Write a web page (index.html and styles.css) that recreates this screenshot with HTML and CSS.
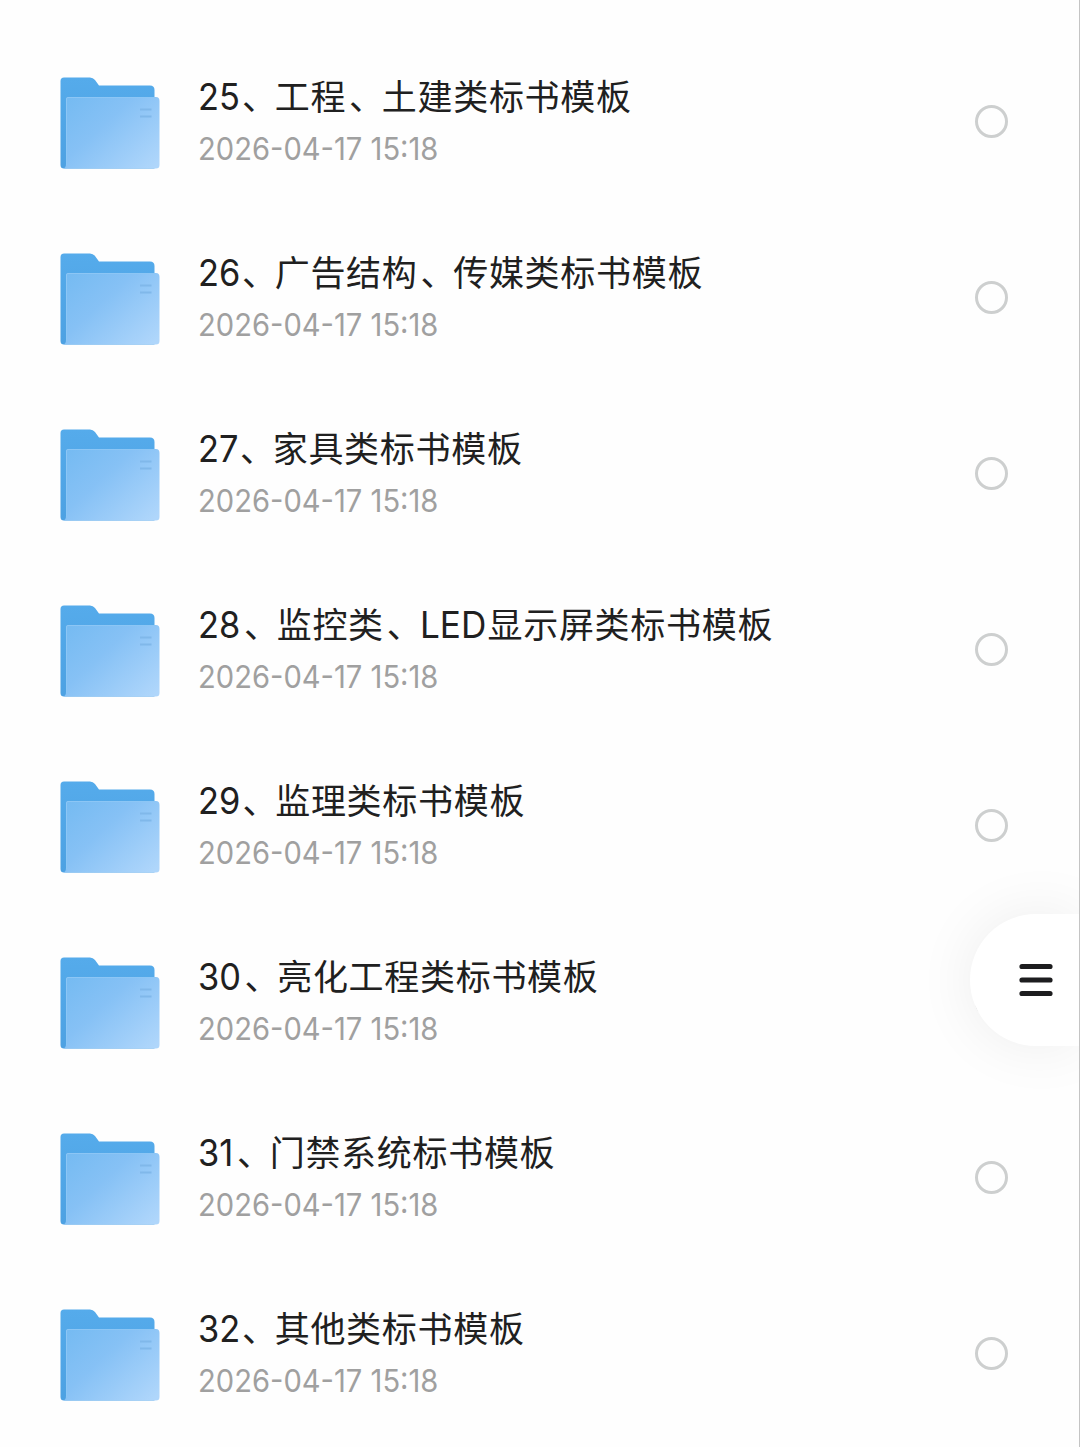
FILE: index.html
```html
<!DOCTYPE html>
<html lang="zh-CN">
<head>
<meta charset="utf-8">
<title>标书模板</title>
<link rel="stylesheet" href="styles.css">
</head>
<body>
<svg class="defs" width="0" height="0" aria-hidden="true">
  <defs>
    <linearGradient id="back" x1="0" y1="0" x2="0" y2="1"><stop offset="0" stop-color="#55abeb"/><stop offset="1" stop-color="#4da1e2"/></linearGradient>
    <linearGradient id="front" x1="0" y1="0.1" x2="1" y2="0.9"><stop offset="0" stop-color="#76bbf2"/><stop offset="0.4" stop-color="#86c1f5"/><stop offset="1" stop-color="#afd6fb"/></linearGradient>
    <symbol id="folder" viewBox="0 0 100 92">
      <path d="M4 .5H30Q33 .5 35 3L39 8.500H90Q94.500 8.500 94.500 13V91.500H4Q.5 91.500 .5 88V4Q.5 .5 4 .5Z" fill="url(#back)"/>
      <path d="M8 20H96Q99.500 20 99.500 24V88Q99.500 91.500 96 91.500H3Q6 91 6 87V22Q6 20 8 20Z" fill="url(#front)"/>
      <path d="M6.500 88V22Q6.500 20.500 8 20.500H96" fill="none" stroke="#8cc6f5"/>
      <path d="M80 32.500H91.500M80 39.500H91.500" stroke="#80b8ea" stroke-width="1.800"/>
    </symbol>
  </defs>
</svg>
<main class="list">
  <div class="row"><svg class="folder"><use href="#folder"/></svg><div class="info"><div class="name"><span class="num n25">25</span><span class="mark">、</span>工程<span class="mark">、</span>土建类标书模板</div><div class="date">2026-04-17 15:18</div></div><span class="radio"></span></div>
  <div class="row"><svg class="folder"><use href="#folder"/></svg><div class="info"><div class="name"><span class="num n26">26</span><span class="mark">、</span>广告结构<span class="mark">、</span>传媒类标书模板</div><div class="date">2026-04-17 15:18</div></div><span class="radio"></span></div>
  <div class="row"><svg class="folder"><use href="#folder"/></svg><div class="info"><div class="name"><span class="num n27">27</span><span class="mark">、</span>家具类标书模板</div><div class="date">2026-04-17 15:18</div></div><span class="radio"></span></div>
  <div class="row"><svg class="folder"><use href="#folder"/></svg><div class="info"><div class="name"><span class="num n28">28</span><span class="mark">、</span>监控类<span class="mark">、</span><span class="led">LED</span>显示屏类标书模板</div><div class="date">2026-04-17 15:18</div></div><span class="radio"></span></div>
  <div class="row"><svg class="folder"><use href="#folder"/></svg><div class="info"><div class="name"><span class="num n29">29</span><span class="mark">、</span>监理类标书模板</div><div class="date">2026-04-17 15:18</div></div><span class="radio"></span></div>
  <div class="row"><svg class="folder"><use href="#folder"/></svg><div class="info"><div class="name"><span class="num n30">30</span><span class="mark">、</span>亮化工程类标书模板</div><div class="date">2026-04-17 15:18</div></div><span class="radio"></span></div>
  <div class="row"><svg class="folder"><use href="#folder"/></svg><div class="info"><div class="name"><span class="num n31">31</span><span class="mark">、</span>门禁系统标书模板</div><div class="date">2026-04-17 15:18</div></div><span class="radio"></span></div>
  <div class="row"><svg class="folder"><use href="#folder"/></svg><div class="info"><div class="name"><span class="num n32">32</span><span class="mark">、</span>其他类标书模板</div><div class="date">2026-04-17 15:18</div></div><span class="radio"></span></div>
</main>
<div class="menu"><svg width="34" height="34" viewBox="0 0 34 34"><path d="M3 3.500H31M3 17H31M3 30.500H31" stroke="#1d1d1f" stroke-width="5.200" stroke-linecap="round"/></svg></div>
</body>
</html>
```
FILE: styles.css
```css
* { box-sizing: border-box; }
body {
  margin: 0;
  height: 1447px;
  position: relative;
  overflow: hidden;
  background: #fefefe;
  border-right: 1px solid #c4c4c4;
}
.defs { position: absolute; }
.list { padding-top: 33px; }
.row {
  height: 176px;
  display: flex;
  align-items: center;
  padding: 0 71px 0 60px;
}
.folder { width: 100px; height: 92px; margin: 3px 0 0 -.5px; flex: none; }
.info { flex: 1; margin-left: 38px; }
.name {
  height: 52px;
  line-height: 52px;
  font-family: "Noto Sans CJK SC", sans-serif;
  font-size: 35px;
  letter-spacing: .7px;
  color: #202020;
  white-space: nowrap;
}
.mark { padding-left: 3px; margin-right: -3px; }
.num, .led {
  display: inline-block;
  font-family: Inter, sans-serif;
  font-size: 37px;
  letter-spacing: 0;
  transform: scaleX(.93);
  transform-origin: left;
}
.n25 { width: 41.5px; }
.n26 { width: 41.5px; }
.n27 { width: 39.5px; }
.n28 { width: 43.5px; }
.n29 { width: 42px; }
.n30 { width: 44px; }
.n31 { width: 36.5px; }
.n32 { width: 41.5px; }
.led { width: 68px; transform: scaleX(.95); }
.date {
  width: 260px;
  height: 52px;
  line-height: 56px;
  font-family: Inter, sans-serif;
  font-size: 31.5px;
  white-space: nowrap;
  color: #a0a0a0;
  transform: scaleX(.925);
  transform-origin: left;
}
.radio {
  width: 33px;
  height: 33px;
  border: 3px solid #cdcfcf;
  border-radius: 50%;
}
.menu {
  position: absolute;
  top: 914px;
  right: 0;
  width: 109px;
  height: 132px;
  padding-left: 49px;
  display: flex;
  align-items: center;
  border-radius: 66px 0 0 66px;
  background: #fff;
  box-shadow: 0 0 60px rgba(0, 0, 0, .07);
}
```
